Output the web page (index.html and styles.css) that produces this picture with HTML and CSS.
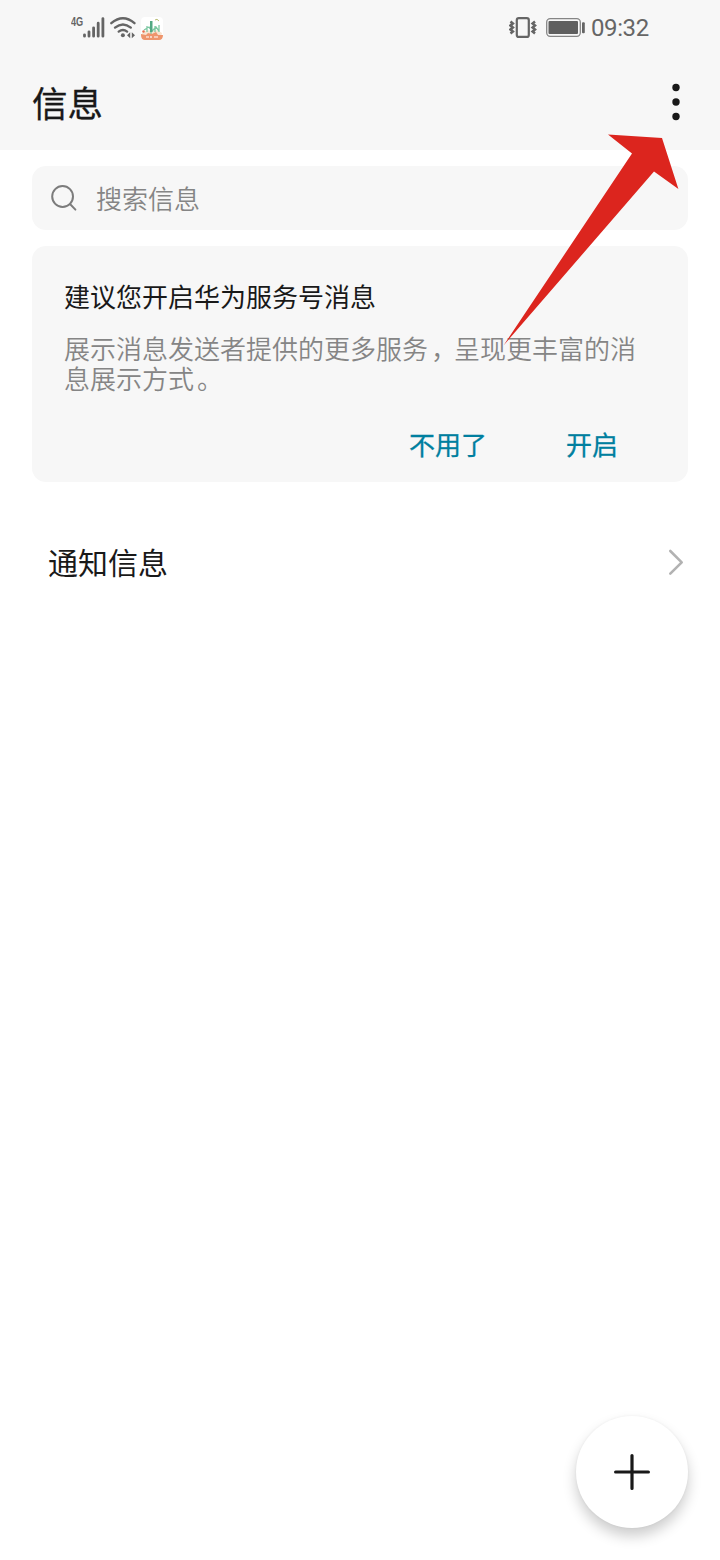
FILE: index.html
```html
<!DOCTYPE html>
<html lang="zh-CN">
<head>
<meta charset="utf-8">
<title>信息</title>
<link rel="stylesheet" href="styles.css">
</head>
<body>
<div class="screen">
  <header class="top">
    <div class="status">
      <div class="status-left">
        <span class="network">4G</span>
        <svg class="signal" width="22" height="21" viewBox="0 0 22 21" stroke="#656565" stroke-width="2.8" stroke-linecap="round"><path d="M1.5 17.8v1.4M6 14.8v4.4M10.6 10.8v8.4M15.2 6.2v13M19.9 1.6v17.6"/></svg>
        <svg class="wifi" width="26" height="21" viewBox="0 0 26 21" fill="none" stroke="#656565" stroke-width="2.4" stroke-linecap="round"><path d="M1.3 6.2Q13-3.8 24.5 6.2M5 10.6Q13 4.2 20.8 10.6M8.7 14.6Q13 11.4 17.1 14.6"/><circle cx="12.9" cy="18.3" r="2" fill="#656565" stroke="none"/><path d="M20.2 15.2v6l-3.2-3zM21.8 15.2v6l3.2-3z" fill="#656565" stroke="none"/></svg>
        <svg class="app" width="22" height="23" viewBox="0 0 22 23"><rect width="22" height="23" rx="4" fill="#fff"/><path d="M1 16q5-4 9-2 5-3 11 2l-1 4H2z" fill="#f7e3d0"/><path d="M10 17V5M6 15V9M14 15V9M3 13l5-3 3 4 4-4 3 4M18 8v7" stroke="#7cc8a2" stroke-width="1.3" fill="none"/><path d="M9 4h2.500v11H9z" fill="#52a883"/><path d="M0 17l5 1 2-2 4 1 4-2 2 3h5q0 5-4 5H4q-4 0-4-5z" fill="#ee956c"/><path d="M5 20h3M10 19v2M13 20h4" stroke="#fff" stroke-width="1.2"/><path d="M14 3q2-2 4 1" stroke="#b8bd72" fill="none"/><circle cx="2.500" cy="14.500" r="1.200" fill="#e76d4c"/></svg>
      </div>
      <div class="status-right">
        <svg class="vibrate" width="28" height="21" viewBox="0 0 28 21" fill="none" stroke="#656565"><rect x="7.8" y="1.1" width="12" height="18.800" rx="2" stroke-width="2.2"/><path d="M1.500 4.500l2.400 2-2.400 2 2.400 2-2.400 2 2.400 2-2.400 2M26 4.500l-2.400 2 2.400 2-2.400 2 2.400 2-2.400 2 2.400 2" stroke-width="2.500"/></svg>
        <svg class="battery" width="39" height="19" viewBox="0 0 39 19"><rect x=".7" y=".7" width="33.6" height="17.6" rx="3.5" fill="none" stroke="#858585" stroke-width="1.3"/><rect x="2.500" y="3" width="29.500" height="13" rx="1" fill="#5f5f5f"/><rect x="36" y="4.2" width="2.8" height="11" rx="1" fill="#656565"/></svg>
        <span class="clock">09:32</span>
      </div>
    </div>
    <div class="titlebar">
      <h1 class="title">信息</h1>
      <svg class="more" width="8" height="38" viewBox="0 0 8 38" fill="#191919"><circle cx="4" cy="4.5" r="3.7"/><circle cx="4" cy="19" r="3.7"/><circle cx="4" cy="33.5" r="3.7"/></svg>
    </div>
  </header>
  <main class="content">
    <div class="search">
      <svg width="28" height="28" viewBox="0 0 28 28" fill="none" stroke="#7c7c7c" stroke-width="2" stroke-linecap="round"><circle cx="12.6" cy="12.5" r="10.4"/><path d="M20 20l5.4 5.6"/></svg>
      <span class="placeholder">搜索信息</span>
    </div>
    <section class="card">
      <h2 class="card-title">建议您开启华为服务号消息</h2>
      <p class="card-text">展示消息发送者提供的更多服务<span class="mark">，</span>呈现更丰富的消息展示方式<span class="mark">。</span></p>
      <div class="actions"><a class="action">不用了</a><a class="action">开启</a></div>
    </section>
    <div class="row">
      <span class="row-label">通知信息</span>
      <svg width="16" height="28" viewBox="0 0 16 28" fill="none" stroke="#b2b2b2" stroke-width="2.6" stroke-linecap="round" stroke-linejoin="round"><path d="M2.3 3L13.7 14.3 2.3 25.6"/></svg>
    </div>
  </main>
  <button class="fab"><svg width="36" height="36" viewBox="0 0 36 36" stroke="#191919" stroke-width="3.2" stroke-linecap="round"><path d="M1.6 18h32.8M18 1.6v32.8"/></svg></button>
  <svg class="arrow" width="176" height="214" viewBox="0 0 176 214"><path d="M106 .5L160 4 176.400 55 152 37.500 1.500 211.500 130 19.500z" fill="#dc251e"/></svg>
</div>
</body>
</html>
```
FILE: styles.css
```css
* { box-sizing: border-box; }
body { margin: 0; background: #fff; font-family: "Noto Sans CJK SC", sans-serif; color: #191919; }
.screen { position: relative; width: 720px; height: 1560px; overflow: hidden; background: #fff; }
.top { height: 150px; background: #f7f7f7; }
.status { height: 56px; display: flex; justify-content: space-between; padding: 0 71px; }
.status-left { display: flex; align-items: flex-start; padding-top: 16px; }
.network { width: 12px; font: bold 12px/12px "Liberation Sans", sans-serif; color: #656565; transform: scaleX(.76); transform-origin: left; }
.signal { margin-top: 1px; }
.wifi { margin: 1px 0 0 5px; overflow: visible; }
.app { margin: 1px 0 0 5px; }
.status-right { display: flex; align-items: center; padding-bottom: 1px; }
.battery { margin: 0 6px 0 9px; }
.clock { font: 24px/28px Roboto, sans-serif; color: #666; width: 58px; margin-top: 1px; letter-spacing: -.4px; white-space: nowrap; }
.titlebar { height: 94px; display: flex; align-items: center; justify-content: space-between; padding: 0 40px 2px 32px; }
.title { margin: 0; padding-bottom: 1px; font-size: 35.5px; font-weight: 400; line-height: 48px; -webkit-text-stroke: .3px #191919; }
.content { padding: 16px 32px; }
.search { height: 64px; border-radius: 14px; background: #f7f7f7; display: flex; align-items: center; gap: 18px; padding-left: 18px; }
.placeholder { font-size: 26px; line-height: 40px; font-weight: 350; color: #858585; }
.card { margin-top: 16px; height: 236px; border-radius: 14px; background: #f7f7f7; padding: 30px 32px 0; }
.card-title { margin: 0; font-size: 26px; line-height: 40px; font-weight: 400; }
.card-text { margin: 17px 0 0; width: 580px; font-size: 26px; line-height: 30px; font-weight: 350; color: #858585; }
.mark { display: inline-block; transform: translateX(3px); }
.actions { display: flex; justify-content: flex-end; gap: 79px; margin-top: 31px; padding-right: 38px; }
.action { font-size: 26px; line-height: 40px; font-weight: 400; color: #007f9f; -webkit-text-stroke: .3px #007f9f; }
.row { height: 96px; margin-top: 32px; padding: 0 4px 0 16px; display: flex; align-items: center; justify-content: space-between; font-size: 30px; }
.row-label { padding-bottom: 2px; }
.fab { position: absolute; right: 32px; bottom: 32px; width: 112px; height: 112px; border: 0; border-radius: 50%; background: #fff; display: flex; align-items: center; justify-content: center; padding: 0; box-shadow: 0 8px 14px rgba(0,0,0,.2), 0 0 3px rgba(0,0,0,.05); }
.arrow { position: absolute; left: 502px; top: 134px; overflow: visible; }
```
